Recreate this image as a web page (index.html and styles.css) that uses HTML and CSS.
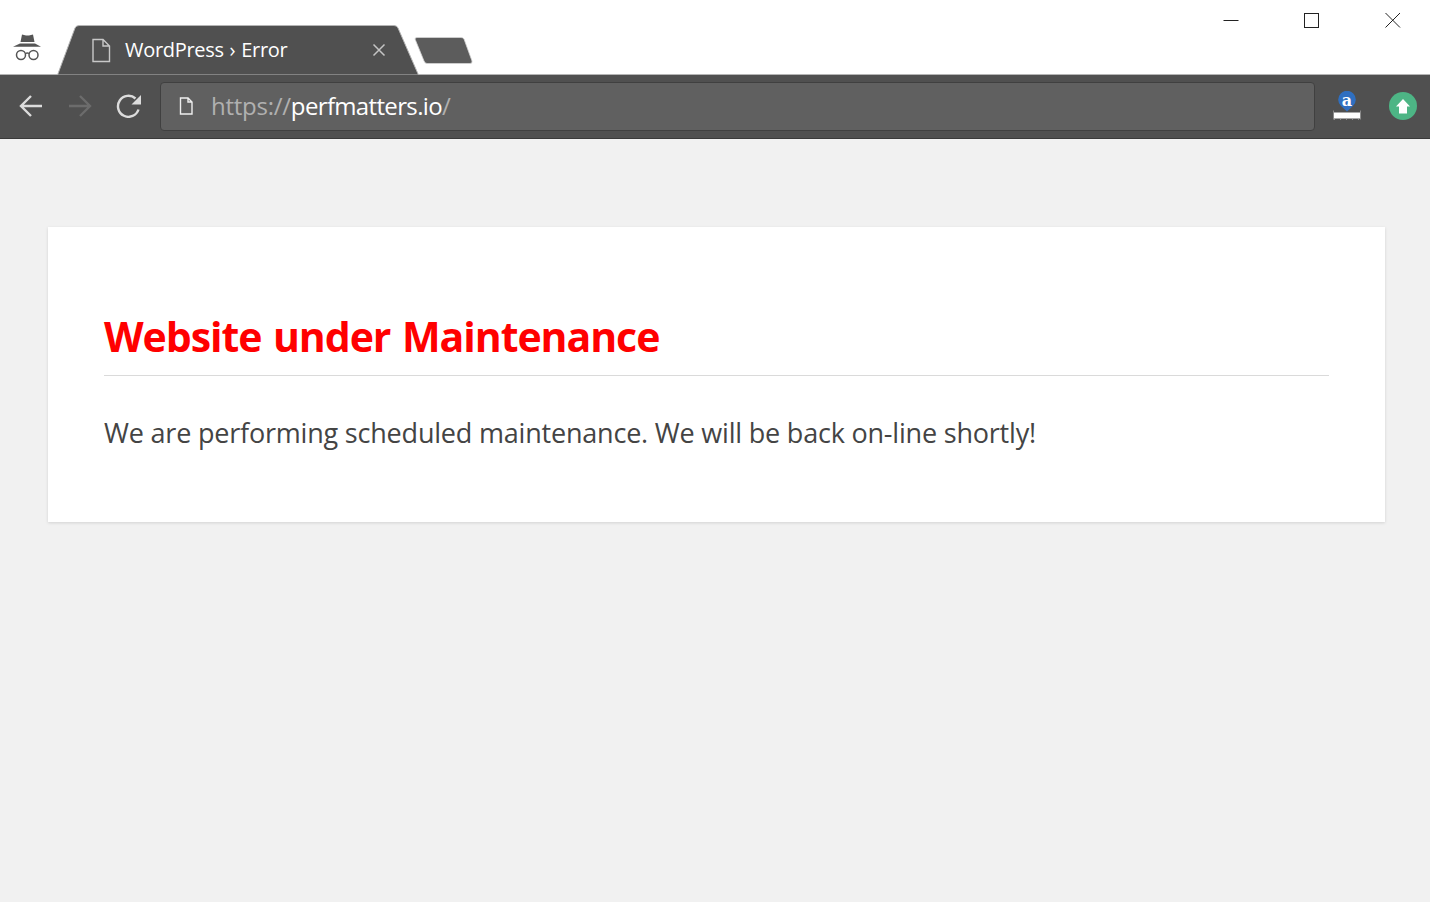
FILE: index.html
```html
<!DOCTYPE html>
<html lang="en">
<head>
<meta charset="utf-8">
<title>WordPress › Error</title>
<link rel="stylesheet" href="styles.css">
</head>
<body>
<header class="chrome">
  <div class="titlebar">
    <svg class="incognito" width="28" height="30" viewBox="0 0 28 30">
      <path d="M7.500 10 9 2.500 13 3.500h3l4-1L21.500 10z" fill="#555"/>
      <path d="M0 14.800 7 11.500h15l6 3.300z" fill="#555"/>
      <circle cx="8" cy="23" r="4.500" fill="none" stroke="#555" stroke-width="1.500"/>
      <circle cx="20.500" cy="23" r="4.500" fill="none" stroke="#555" stroke-width="1.500"/>
      <path d="M12.500 21.500q1.800-1 3.500 0" fill="none" stroke="#555" stroke-width="1.400"/>
    </svg>
    <div class="tab">
      <svg class="tab-shape" width="362" height="50" viewBox="0 0 362 50">
        <path d="M0.500 50 18 3Q19 0.500 22 0.500H337Q340 0.500 341 3L361.500 50z" fill="#505050" stroke="#b5b5b5"/>
      </svg>
      <svg class="tab-doc" width="20" height="25" viewBox="0 0 20 25">
        <path d="M2 1.500H12L18.500 8V23.500H2zM12 1.500V8H18.500" fill="none" stroke="#c8c8c8" stroke-width="1.400"/>
      </svg>
      <span class="tab-title">WordPress <span class="tab-sep">›</span> Error</span>
      <svg class="tab-close" width="14" height="14" viewBox="0 0 14 14">
        <path d="M1.500 1.500 12.500 12.500M12.500 1.500 1.500 12.500" stroke="#c4c4c4" stroke-width="1.500"/>
      </svg>
    </div>
    <svg class="new-tab" width="60" height="30" viewBox="0 0 60 30">
      <path d="M3 3Q3 1.500 5 1.500H49Q51 1.500 52 3L60 25Q60.500 27.500 58 27.500H15Q13 27.500 12 25z" fill="#5c5c5c" stroke="#d4d4d4" stroke-width="0.800"/>
    </svg>
    <div class="window-controls">
      <svg class="win-btn" width="16" height="16" viewBox="0 0 16 16"><path d="M0.500 8.500H15.500" stroke="#222" stroke-width="1"/></svg>
      <svg class="win-btn" width="16" height="16" viewBox="0 0 16 16"><rect x="0.500" y="1.500" width="14" height="14" fill="none" stroke="#222" stroke-width="1"/></svg>
      <svg class="win-btn" width="16" height="16" viewBox="0 0 16 16"><path d="M0.500 1 15 15.500M15 1 0.500 15.500" stroke="#222" stroke-width="1"/></svg>
    </div>
  </div>
  <div class="toolbar">
    <svg class="nav" width="26" height="24" viewBox="0 0 26 24"><path d="M24 12H3M13 2 3 12 13 22" fill="none" stroke="#dcdcdc" stroke-width="2.400"/></svg>
    <svg class="nav" width="26" height="24" viewBox="0 0 26 24"><path d="M2 12H23M13 2 23 12 13 22" fill="none" stroke="#6c6c6c" stroke-width="2.400"/></svg>
    <svg class="nav" width="26" height="24" viewBox="0 0 26 24"><path d="M22.500 15.500A10.500 10.500 0 1 1 19.500 4.500" fill="none" stroke="#dcdcdc" stroke-width="2.400"/><path d="M25 1V10.500H15.500z" fill="#dcdcdc"/></svg>
    <div class="omnibox">
      <svg class="omni-doc" width="14" height="18" viewBox="0 0 14 18"><path d="M1.500 1H9L13 5V17H1.500zM9 1V5H13" fill="none" stroke="#eee" stroke-width="1.400"/></svg>
      <span class="url"><span class="url-dim">https://</span>perfmatters.io<span class="url-dim">/</span></span>
    </div>
    <svg class="ext-amazon" width="30" height="30" viewBox="0 0 30 30">
      <path d="M15 20.500 9 15A8.800 8.800 0 1 1 21 15z" fill="#2f6fc0"/>
      <text x="15" y="15" class="ext-a" text-anchor="middle">a</text>
      <rect x="2" y="21.500" width="26" height="6" fill="#fff"/>
      <path d="M1.500 19.500V28.500M28.500 19.500V28.500" stroke="#8a8a8a" stroke-width="1"/>
      <path d="M2 28.500H28" stroke="#8a8a8a" stroke-width="1" stroke-dasharray="1 5"/>
    </svg>
    <svg class="ext-up" width="28" height="28" viewBox="0 0 28 28">
      <circle cx="14" cy="14" r="14" fill="#4db585"/>
      <path d="M14 7 21 14.500H18V21.500H10V14.500H7z" fill="#fff"/>
    </svg>
  </div>
</header>
<main class="page">
  <section class="card">
    <h1 class="card-title">Website under Maintenance</h1>
    <p class="card-text">We are performing scheduled maintenance. We will be back on-line shortly!</p>
  </section>
</main>
</body>
</html>
```
FILE: styles.css
```css
* { box-sizing: border-box; }
html, body { margin: 0; height: 100%; }
body {
  background: #f1f1f1;
  font-family: "Open Sans", "Noto Sans", "Liberation Sans", sans-serif;
  overflow: hidden;
}
.chrome { display: flex; flex-direction: column; }
.titlebar {
  height: 75px;
  background: #fff;
  border-bottom: 1px solid #b5b5b5;
  display: flex;
  align-items: flex-end;
}
.incognito { margin: 0 0 12px 13px; flex: none; }
.tab {
  position: relative;
  width: 362px;
  height: 50px;
  margin-left: 16px;
  margin-bottom: -1px;
  flex: none;
  display: flex;
  align-items: center;
  color: #fff;
}
.tab-shape { position: absolute; left: 0; top: 0; }
.tab-doc { position: relative; margin-left: 34px; flex: none; }
.tab-title { position: relative; top: -1px; margin-left: 14px; font-size: 20px; letter-spacing: -0.3px; white-space: nowrap; flex: 1; }
.tab-sep { margin: 0 1px; }
.tab-close { position: relative; margin-right: 33px; flex: none; }
.new-tab { margin: 0 0 8px -7px; flex: none; overflow: visible; }
.window-controls {
  margin-left: auto;
  align-self: flex-start;
  display: flex;
  gap: 65px;
  padding: 12px 29px 0 0;
}
.toolbar {
  height: 64px;
  background: #505050;
  border-bottom: 1px solid #3a3a3a;
  display: flex;
  align-items: center;
  padding: 0 0 2px 18px;
}
.nav { flex: none; margin-right: 23px; }
.omnibox {
  flex: 1;
  height: 49px;
  margin: 2px 0 0 -5px;
  background: #606060;
  border: 1px solid #404040;
  border-radius: 4px;
  display: flex;
  align-items: center;
  padding: 0 0 2px 18px;
}
.omni-doc { flex: none; }
.url { margin-left: 18px; font-size: 24px; letter-spacing: -0.65px; color: #fff; white-space: nowrap; }
.url-dim { color: #b0b0b0; letter-spacing: -0.25px; }
.ext-amazon { margin-left: 17px; flex: none; }
.ext-a { font: bold 16px "DejaVu Serif", serif; fill: #fff; }
.ext-up { margin: 0 13px 0 27px; flex: none; }
.page { padding: 88px 45px 0 48px; }
.card {
  height: 295px;
  background: #fff;
  box-shadow: 0 1px 3px rgba(0, 0, 0, 0.13);
  padding: 79px 56px 0;
}
.card-title {
  margin: 0;
  height: 70px;
  border-bottom: 1px solid #dadada;
  color: #f00;
  font-size: 41px;
  line-height: 60px;
  font-weight: 700;
  letter-spacing: -1.05px;
  word-spacing: 2px;
  white-space: nowrap;
}
.card-text {
  margin: 35px 0 0;
  color: #444;
  font-size: 27px;
  line-height: 44px;
  letter-spacing: -0.2px;
  white-space: nowrap;
}
```
